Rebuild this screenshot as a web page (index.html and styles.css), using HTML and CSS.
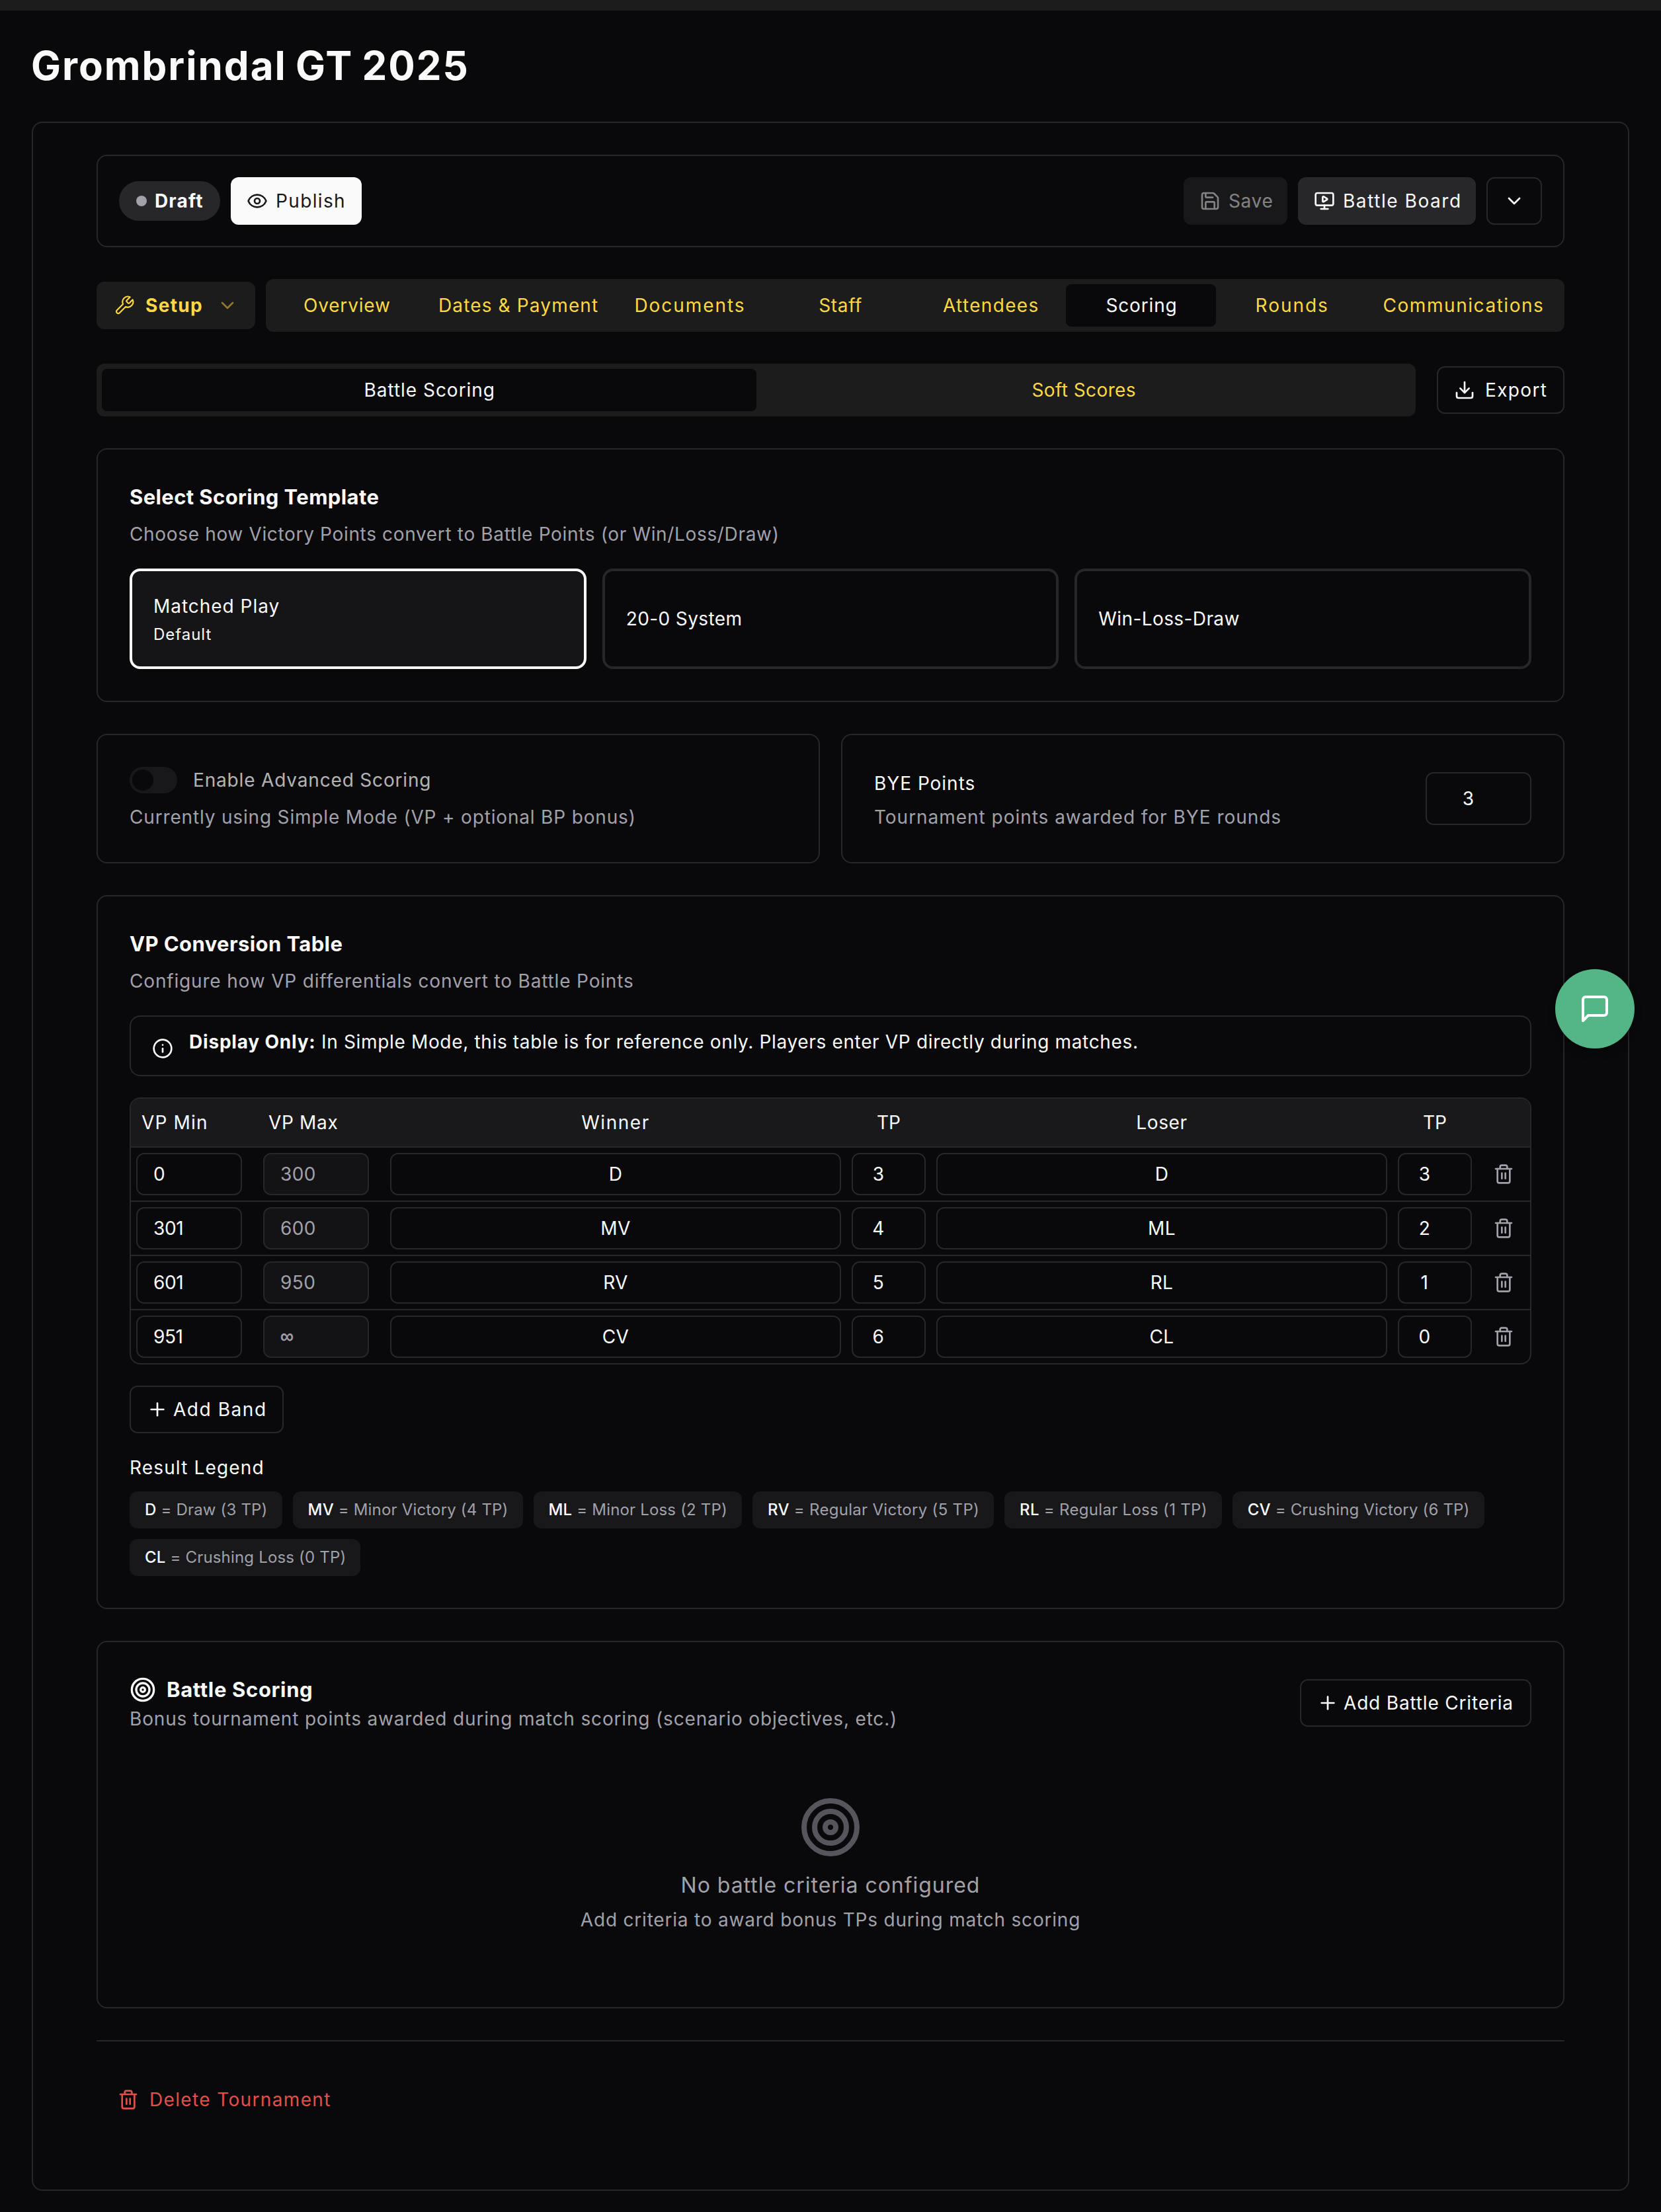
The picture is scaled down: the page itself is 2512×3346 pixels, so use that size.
FILE: index.html
```html
<!DOCTYPE html>
<html lang="en">
<head>
  <meta charset="UTF-8" />
  <meta name="viewport" content="width=device-width, initial-scale=1" />
  <title>Grombrindal GT 2025</title>
  <link rel="stylesheet" href="styles.css">
</head>
<body>
  <!-- Icon sprite -->
  <svg class="sprite" width="0" height="0" aria-hidden="true">
    <symbol id="i-eye" viewBox="0 0 24 24"><path d="M2.062 12.348a1 1 0 0 1 0-.696 10.75 10.75 0 0 1 19.876 0 1 1 0 0 1 0 .696 10.75 10.75 0 0 1-19.876 0" /><circle cx="12" cy="12" r="3" /></symbol>
    <symbol id="i-save" viewBox="0 0 24 24"><path d="M15.2 3a2 2 0 0 1 1.4.6l3.8 3.8a2 2 0 0 1 .6 1.4V19a2 2 0 0 1-2 2H5a2 2 0 0 1-2-2V5a2 2 0 0 1 2-2z" /><path d="M17 21v-7a1 1 0 0 0-1-1H8a1 1 0 0 0-1 1v7" /><path d="M7 3v4a1 1 0 0 0 1 1h7" /></symbol>
    <symbol id="i-board" viewBox="0 0 24 24"><path d="M10 7.75a.75.75 0 0 1 1.142-.638l3.664 2.249a.75.75 0 0 1 0 1.278l-3.664 2.25a.75.75 0 0 1-1.142-.64z" /><path d="M12 17v4" /><path d="M8 21h8" /><rect x="2" y="3" width="20" height="14" rx="2" /></symbol>
    <symbol id="i-chevron" viewBox="0 0 24 24"><path d="m6 9 6 6 6-6" /></symbol>
    <symbol id="i-wrench" viewBox="0 0 24 24"><path d="M14.7 6.3a1 1 0 0 0 0 1.4l1.6 1.6a1 1 0 0 0 1.4 0l3.77-3.77a6 6 0 0 1-7.94 7.94l-6.91 6.91a2.12 2.12 0 0 1-3-3l6.91-6.91a6 6 0 0 1 7.94-7.94l-3.76 3.76z" /></symbol>
    <symbol id="i-download" viewBox="0 0 24 24"><path d="M12 15V3" /><path d="M21 15v4a2 2 0 0 1-2 2H5a2 2 0 0 1-2-2v-4" /><path d="m7 10 5 5 5-5" /></symbol>
    <symbol id="i-info" viewBox="0 0 24 24"><circle cx="12" cy="12" r="10" /><path d="M12 16v-4" /><path d="M12 8h.01" /></symbol>
    <symbol id="i-trash" viewBox="0 0 24 24"><path d="M3 6h18" /><path d="M19 6v14a2 2 0 0 1-2 2H7a2 2 0 0 1-2-2V6" /><path d="M8 6V4a2 2 0 0 1 2-2h4a2 2 0 0 1 2 2v2" /><path d="M10 11v6" /><path d="M14 11v6" /></symbol>
    <symbol id="i-plus" viewBox="0 0 24 24"><path d="M5 12h14" /><path d="M12 5v14" /></symbol>
    <symbol id="i-target" viewBox="0 0 24 24"><circle cx="12" cy="12" r="10" /><circle cx="12" cy="12" r="6" /><circle cx="12" cy="12" r="2" /></symbol>
    <symbol id="i-message" viewBox="0 0 24 24"><path d="M21 15a2 2 0 0 1-2 2H7l-4 4V5a2 2 0 0 1 2-2h14a2 2 0 0 1 2 2z" /></symbol>
  </svg>

  <div class="topbar"></div>

  <h1>Grombrindal GT 2025</h1>

  <main class="panel">
    <!-- Status and actions -->
    <div class="toolbar">
      <div class="badge"><span class="dot"></span><span class="ls-3">Draft</span></div>
      <button class="btn btn-primary"><svg class="icon"><use href="#i-eye" /></svg><span class="ls-4">Publish</span></button>
      <div class="spacer"></div>
      <button class="btn btn-save" disabled><svg class="icon"><use href="#i-save" /></svg><span class="ls-1">Save</span></button>
      <button class="btn btn-board"><svg class="icon"><use href="#i-board" /></svg><span class="ls-5">Battle Board</span></button>
      <button class="btn btn-outline btn-more" aria-label="More"><svg class="icon"><use href="#i-chevron" /></svg></button>
    </div>

    <!-- Main navigation -->
    <div class="nav-row">
      <button class="setup">
        <svg class="icon icon-thin"><use href="#i-wrench" /></svg>
        <span class="ls-4">Setup</span>
        <svg class="icon caret"><use href="#i-chevron" /></svg>
      </button>
      <nav class="tabs main-tabs">
        <a class="tab ls-2">Overview</a>
        <a class="tab ls-3">Dates &amp; Payment</a>
        <a class="tab ls-6">Documents</a>
        <a class="tab ls-1">Staff</a>
        <a class="tab ls-4">Attendees</a>
        <a class="tab ls-2 active">Scoring</a>
        <a class="tab ls-6">Rounds</a>
        <a class="tab ls-5">Communications</a>
      </nav>
    </div>

    <div class="score-row">
      <nav class="tabs score-tabs">
        <a class="tab ls-2b active">Battle Scoring</a>
        <a class="tab ls-0">Soft Scores</a>
      </nav>
      <button class="btn btn-outline btn-export"><svg class="icon"><use href="#i-download" /></svg><span class="ls-4">Export</span></button>
    </div>

    <!-- Scoring template -->
    <section class="card">
      <h2 class="ls-0">Select Scoring Template</h2>
      <p class="desc ls-1">Choose how Victory Points convert to Battle Points (or Win/Loss/Draw)</p>
      <div class="options">
        <div class="option selected">
          <span class="ls-2b">Matched Play</span>
          <small class="ls-2b">Default</small>
        </div>
        <div class="option"><span class="ls-0">20-0 System</span></div>
        <div class="option"><span class="ls-0">Win-Loss-Draw</span></div>
      </div>
    </section>

    <div class="two-col">
      <section class="card">
        <div class="switch-row">
          <span class="switch"></span>
          <span class="switch-label ls-2">Enable Advanced Scoring</span>
        </div>
        <p class="desc ls-2">Currently using Simple Mode (VP + optional BP bonus)</p>
      </section>
      <section class="card bye">
        <div>
          <p class="bye-label ls-2b">BYE Points</p>
          <p class="desc ls-2b">Tournament points awarded for BYE rounds</p>
        </div>
        <div class="field field-num bye-field">3</div>
      </section>
    </div>

    <!-- VP conversion -->
    <section class="card">
      <h2 class="ls-0">VP Conversion Table</h2>
      <p class="desc ls-2">Configure how VP differentials convert to Battle Points</p>

      <div class="alert">
        <svg class="icon"><use href="#i-info" /></svg>
        <p class="ls-1"><strong>Display Only:</strong> In Simple Mode, this table is for reference only. Players enter VP directly during matches.</p>
      </div>

      <div class="table">
        <div class="row head">
          <div class="ls-3">VP Min</div>
          <div class="ls-1">VP Max</div>
          <div class="center ls-5">Winner</div>
          <div class="center">TP</div>
          <div class="center ls-1">Loser</div>
          <div class="center">TP</div>
          <div></div>
        </div>
        <div class="row">
          <div class="field">0</div>
          <div class="field muted">300</div>
          <div class="field field-text">D</div>
          <div class="field field-num">3</div>
          <div class="field field-text">D</div>
          <div class="field field-num">3</div>
          <svg class="icon"><use href="#i-trash" /></svg>
        </div>
        <div class="row">
          <div class="field tight">301</div>
          <div class="field muted">600</div>
          <div class="field field-text">MV</div>
          <div class="field field-num">4</div>
          <div class="field field-text">ML</div>
          <div class="field field-num">2</div>
          <svg class="icon"><use href="#i-trash" /></svg>
        </div>
        <div class="row">
          <div class="field tight">601</div>
          <div class="field muted">950</div>
          <div class="field field-text">RV</div>
          <div class="field field-num">5</div>
          <div class="field field-text">RL</div>
          <div class="field field-num">1</div>
          <svg class="icon"><use href="#i-trash" /></svg>
        </div>
        <div class="row">
          <div class="field tight">951</div>
          <div class="field muted infinity">∞</div>
          <div class="field field-text">CV</div>
          <div class="field field-num">6</div>
          <div class="field field-text">CL</div>
          <div class="field field-num">0</div>
          <svg class="icon"><use href="#i-trash" /></svg>
        </div>
      </div>

      <button class="btn btn-outline btn-band"><svg class="icon"><use href="#i-plus" /></svg><span class="ls-5">Add Band</span></button>

      <p class="legend-title ls-3">Result Legend</p>
      <div class="legend">
        <span class="chip"><b>D</b> = Draw (3 TP)</span>
        <span class="chip"><b>MV</b> = Minor Victory (4 TP)</span>
        <span class="chip"><b>ML</b> = Minor Loss (2 TP)</span>
        <span class="chip chip-wide"><b>RV</b> = Regular Victory (5 TP)</span>
        <span class="chip chip-wide"><b>RL</b> = Regular Loss (1 TP)</span>
        <span class="chip"><b>CV</b> = Crushing Victory (6 TP)</span>
        <span class="chip"><b>CL</b> = Crushing Loss (0 TP)</span>
      </div>
    </section>

    <!-- Battle criteria -->
    <section class="card criteria">
      <div class="criteria-head">
        <div>
          <h2 class="ls-1"><svg class="icon icon-md"><use href="#i-target" /></svg>Battle Scoring</h2>
          <p class="desc ls-2">Bonus tournament points awarded during match scoring (scenario objectives, etc.)</p>
        </div>
        <button class="btn btn-outline btn-criteria"><svg class="icon"><use href="#i-plus" /></svg><span class="ls-2">Add Battle Criteria</span></button>
      </div>
      <div class="empty">
        <svg class="icon icon-xl"><use href="#i-target" /></svg>
        <p class="empty-title ls-2b">No battle criteria configured</p>
        <p class="empty-text">Add criteria to award bonus TPs during match scoring</p>
      </div>
    </section>

    <div class="danger">
      <button class="btn btn-delete"><svg class="icon"><use href="#i-trash" /></svg><span class="ls-4">Delete Tournament</span></button>
    </div>
  </main>

  <button class="chat" aria-label="Chat"><svg class="icon icon-lg"><use href="#i-message" /></svg></button>
</body>
</html>
```
FILE: styles.css
```css
* {
  box-sizing: border-box;
  margin: 0;
  padding: 0;
}
:root {
  --bg: #09090b;
  --border: #27272a;
  --text: #fafafa;
  --muted: #a1a1aa;
  --accent: #fdd844;
  --surface: #1c1c1c;
}
body {
  font-family: Inter, "Noto Sans", sans-serif;
  font-size: 28px;
  line-height: 40px;
  font-weight: 400;
  background: var(--bg);
  color: var(--text);
  min-height: 3346px;
  position: relative;
}
button {
  font: inherit;
  color: inherit;
  border: none;
  background: none;
}
.sprite {
  position: absolute;
}
.topbar {
  height: 16px;
  background: var(--surface);
}
h1 {
  font-size: 60px;
  line-height: 72px;
  font-weight: 700;
  letter-spacing: 2px;
  word-spacing: -3px;
  padding: 47px 47px 49px;
}
h2 {
  font-size: 31px;
  line-height: 48px;
  font-weight: 700;
}

/* letter spacing steps */
.ls-0 { letter-spacing: 0.4px; }
.ls-1 { letter-spacing: 0.66px; }
.ls-2 { letter-spacing: 0.83px; }
.ls-2b { letter-spacing: 0.97px; }
.ls-3 { letter-spacing: 1.15px; }
.ls-4 { letter-spacing: 1.35px; }
.ls-5 { letter-spacing: 1.55px; }
.ls-6 { letter-spacing: 1.95px; }

.icon {
  width: 32px;
  height: 32px;
  flex-shrink: 0;
  fill: none;
  stroke: currentColor;
  stroke-width: 2;
  stroke-linecap: round;
  stroke-linejoin: round;
}
.icon-thin { stroke-width: 1.6; }
.icon-md { width: 40px; height: 40px; }
.icon-lg { width: 48px; height: 48px; }
.icon-xl { width: 96px; height: 96px; }

.panel {
  margin: 0 48px;
  padding: 48px 96px 100px;
  border: 2px solid var(--border);
  border-radius: 16px;
  display: flex;
  flex-direction: column;
  gap: 48px;
}

/* toolbar */
.toolbar {
  display: flex;
  align-items: center;
  gap: 16px;
  height: 140px;
  padding: 0 32px;
  border: 2px solid var(--border);
  border-radius: 16px;
}
.spacer { flex: 1; }
.badge {
  display: flex;
  align-items: center;
  gap: 12px;
  width: 153px;
  height: 60px;
  padding-left: 26px;
  border-radius: 30px;
  background: var(--border);
  font-weight: 700;
}
.dot {
  width: 16px;
  height: 16px;
  border-radius: 50%;
  background: var(--muted);
}
.btn {
  display: flex;
  align-items: center;
  gap: 12px;
  height: 72px;
  padding: 0 24px;
  border-radius: 12px;
  white-space: nowrap;
}
.btn-primary {
  width: 198px;
  background: var(--text);
  color: #18181b;
}
.btn-save {
  width: 157px;
  background: var(--border);
  opacity: 0.5;
}
.btn-board {
  width: 269px;
  background: var(--border);
}
.btn-outline {
  border: 2px solid var(--border);
}
.btn-more { width: 84px; }

/* navigation */
.nav-row {
  display: flex;
  align-items: center;
  gap: 16px;
  color: var(--accent);
}
.setup {
  display: flex;
  align-items: center;
  gap: 16px;
  width: 240px;
  height: 72px;
  padding: 0 26px;
  border-radius: 12px;
  background: var(--surface);
  font-weight: 700;
}
.caret {
  margin-left: auto;
  opacity: 0.5;
}
.tabs {
  flex: 1;
  display: grid;
  height: 80px;
  padding: 8px;
  border-radius: 12px;
  background: var(--surface);
  color: var(--accent);
}
.main-tabs { grid-template-columns: 1fr 291px 1fr 1fr 1fr 1fr 1fr 291px; }
.score-tabs { grid-template-columns: 1fr 1fr; }
.tab {
  display: flex;
  align-items: center;
  justify-content: center;
  padding-left: 2px;
  border-radius: 8px;
  white-space: nowrap;
}
.tab.active {
  background: var(--bg);
  color: var(--text);
}
.score-row {
  display: flex;
  align-items: center;
  gap: 32px;
}
.btn-export {
  width: 193px;
  gap: 15px;
}

/* cards */
.card {
  padding: 48px;
  border: 2px solid var(--border);
  border-radius: 16px;
}
.desc {
  margin-top: 12px;
  color: var(--muted);
}
.options {
  display: grid;
  grid-template-columns: repeat(3, 1fr);
  gap: 24px;
  margin-top: 32px;
}
.option {
  display: flex;
  flex-direction: column;
  justify-content: center;
  height: 152px;
  padding: 0 32px;
  border: 4px solid var(--border);
  border-radius: 16px;
}
.option small {
  margin-top: 7px;
  font-size: 24px;
  line-height: 32px;
}
.option.selected {
  border-color: var(--text);
  background: #151517;
}
.two-col {
  display: grid;
  grid-template-columns: 1fr 1fr;
  gap: 32px;
}
.switch-row {
  display: flex;
  align-items: center;
  gap: 24px;
}
.switch-row + .desc { margin-top: 16px; }
.switch {
  width: 72px;
  height: 40px;
  padding: 4px;
  border-radius: 20px;
  background: #18181a;
}
.switch::before {
  content: "";
  display: block;
  width: 32px;
  height: 32px;
  border-radius: 50%;
  background: var(--bg);
}
.switch-label { opacity: 0.7; }
.bye {
  display: flex;
  align-items: center;
  justify-content: space-between;
}
.bye-label { padding-top: 5px; }
.bye .desc { margin-top: 11px; }

/* fields */
.field {
  display: flex;
  align-items: center;
  width: 160px;
  height: 64px;
  padding: 0 24px;
  border: 2px solid var(--border);
  border-radius: 12px;
  letter-spacing: 0.4px;
}
.tight { letter-spacing: -0.4px; }
.field-num {
  justify-content: center;
  width: auto;
  padding: 0 31px 0 0;
}
.field-text {
  justify-content: center;
  width: auto;
}
.bye-field {
  width: 160px;
  height: 80px;
}
.muted {
  background: #131315;
  color: var(--muted);
}
.infinity {
  font-family: "Liberation Sans", sans-serif;
  -webkit-text-stroke: 0.6px var(--muted);
}

.alert {
  display: flex;
  gap: 24px;
  height: 92px;
  margin-top: 32px;
  padding: 18px 32px 0;
  border: 2px solid var(--border);
  border-radius: 16px;
}
.alert .icon { margin-top: 14px; }
.alert strong {
  font-weight: 700;
  letter-spacing: 0.8px;
}

/* conversion table */
.table {
  margin-top: 32px;
  border: 2px solid var(--border);
  border-radius: 16px;
  overflow: hidden;
}
.row {
  display: grid;
  grid-template-columns: 192px 192px 1fr 128px 1fr 128px 80px;
  align-items: center;
  height: 82px;
  border-bottom: 2px solid var(--border);
}
.row:last-child {
  height: 80px;
  border-bottom: none;
}
.row .field { margin: 0 8px; }
.row .icon {
  justify-self: center;
  color: var(--muted);
}
.head {
  height: 74px;
  background: #19191b;
}
.head div { padding: 0 16px; }
.head .center { text-align: center; }

.btn-band {
  width: 233px;
  gap: 8px;
  margin-top: 32px;
}
.legend-title { margin-top: 32px; }
.legend {
  display: flex;
  flex-wrap: wrap;
  gap: 16px;
  margin-top: 16px;
}
.chip {
  height: 56px;
  padding: 0 22px 0 23px;
  border-radius: 12px;
  background: #18181a;
  color: var(--muted);
  font-size: 24px;
  line-height: 56px;
  letter-spacing: 0.18px;
  white-space: nowrap;
}
.chip-wide { letter-spacing: 0.3px; }
.chip b {
  font-weight: 500;
  color: var(--text);
}

/* criteria */
.criteria { padding-bottom: 112px; }
.criteria-head {
  display: flex;
  align-items: center;
  justify-content: space-between;
}
.criteria h2 {
  display: flex;
  align-items: center;
  gap: 16px;
}
.criteria .desc { margin-top: 0; }
.btn-criteria {
  width: 350px;
  gap: 8px;
}
.empty {
  display: flex;
  flex-direction: column;
  align-items: center;
  margin-top: 96px;
  color: var(--muted);
}
.icon-xl { opacity: 0.5; }
.empty-title {
  margin: 16px 0 8px;
  font-size: 32px;
  line-height: 48px;
}
.empty-text { letter-spacing: 0.8px; }

.danger {
  padding-top: 52px;
  border-top: 2px solid var(--border);
}
.btn-delete {
  padding: 0 32px;
  gap: 16px;
  color: #e0504b;
}

.chat {
  position: absolute;
  top: 1466px;
  right: 40px;
  display: flex;
  align-items: center;
  justify-content: center;
  width: 120px;
  height: 120px;
  border-radius: 50%;
  background: #54b686;
  color: #fff;
  box-shadow: 0 8px 12px rgba(0, 0, 0, 0.3);
}
```
